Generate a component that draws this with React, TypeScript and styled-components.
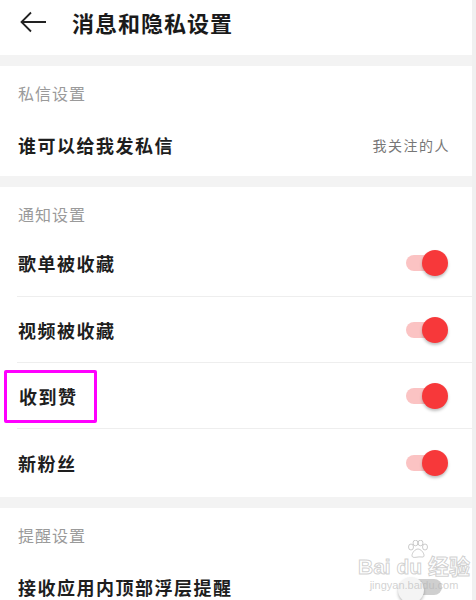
import styled, { createGlobalStyle } from 'styled-components';

const GlobalStyle = createGlobalStyle`
  *, *::before, *::after {
    box-sizing: border-box;
  }
  body {
    margin: 0;
    background: #ffffff;
    font-family: "Noto Sans CJK SC", "Noto Sans", sans-serif;
  }
`;

interface IToggleRow {
  label: string;
  on: boolean;
  height: number;
  lift: number;
  marked?: boolean;
}

const notifyRows: IToggleRow[] = [
  { label: '歌单被收藏', on: true, height: 56, lift: 12 },
  { label: '视频被收藏', on: true, height: 66, lift: 0 },
  { label: '收到赞', on: true, height: 66, lift: 0, marked: true },
  { label: '新粉丝', on: true, height: 68, lift: 0 },
];

export default function App() {
  return (
    <Page>
      <GlobalStyle />
      <Header>
        <BackIcon width={28} height={22} viewBox="0 0 28 22">
          <path d="M27 11H3M12 1.5L2.5 11l9.5 9.5" fill="none" stroke="#222" strokeWidth={1.8} />
        </BackIcon>
        <Title>消息和隐私设置</Title>
      </Header>
      <Gap />
      <Section>
        <SectionLabel>私信设置</SectionLabel>
        <Row h={56} lift={6}>
          <RowText>谁可以给我发私信</RowText>
          <RowValue>我关注的人</RowValue>
        </Row>
      </Section>
      <Gap />
      <Section>
        <SectionLabel>通知设置</SectionLabel>
        {notifyRows.map((row, index) => (
          <Row
            key={row.label}
            h={row.height}
            lift={row.lift}
            divided={index < notifyRows.length - 1}>
            {row.marked ? (
              <Marked>
                <RowText>{row.label}</RowText>
              </Marked>
            ) : (
              <RowText>{row.label}</RowText>
            )}
            <Toggle on={row.on}>
              <Knob on={row.on} />
            </Toggle>
          </Row>
        ))}
      </Section>
      <Gap />
      <Section>
        <SectionLabel>提醒设置</SectionLabel>
        <Row h={56} lift={6}>
          <RowText>接收应用内顶部浮层提醒</RowText>
          <Toggle on={false}>
            <Knob on={false} />
          </Toggle>
        </Row>
      </Section>
      <Watermark>
        {/* baidu paw */}
        <Paw width={22} height={18} viewBox="0 0 22 18">
          <g fill="none" stroke="rgba(170,170,170,0.6)" strokeWidth={1}>
            <ellipse cx={4} cy={7} rx={2.5} ry={3} />
            <ellipse cx={8.5} cy={3} rx={2.5} ry={2.8} />
            <ellipse cx={13.5} cy={3} rx={2.5} ry={2.8} />
            <ellipse cx={18} cy={7} rx={2.5} ry={3} />
            <path d="M11 9c-3 0-6 4-6 6.5S8 17.5 11 17s6 1 6-1.5S14 9 11 9z" />
          </g>
        </Paw>
        <WatermarkLogo>Bai du 经验</WatermarkLogo>
        <WatermarkUrl>jingyan.baidu.com</WatermarkUrl>
      </Watermark>
    </Page>
  );
}

const Page = styled.div`
  position: relative;
  width: 476px;
  height: 600px;
  overflow: hidden;
  background: #fff;
  border-right: 4px solid #f0f0f0;
`;

const Header = styled.header`
  display: flex;
  align-items: center;
  height: 55px;
  padding: 0 0 11px 19px;
  gap: 25px;
`;

const BackIcon = styled.svg`
  display: block;
`;

const Title = styled.h1`
  margin: 0;
  font-size: 22px;
  font-weight: 700;
  color: #1a1a1a;
  letter-spacing: 1px;
`;

const Gap = styled.div`
  height: 11px;
  background: #f3f3f3;
`;

const Section = styled.section`
  display: flex;
  flex-direction: column;
`;

const SectionLabel = styled.div`
  height: 54px;
  line-height: 54px;
  padding-left: 18px;
  font-size: 16px;
  color: #9a9a9a;
  letter-spacing: 1px;
`;

const Row = styled.div<{ h: number; lift: number; divided?: boolean }>`
  position: relative;
  display: flex;
  align-items: center;
  justify-content: space-between;
  height: ${({ h }) => h}px;
  padding: 0 30px ${({ lift }) => lift}px 18px;
  &::after {
    content: '';
    position: absolute;
    left: 17px;
    right: 0;
    bottom: 0;
    height: 1px;
    background: ${({ divided }) => (divided ? '#eeeeee' : 'transparent')};
  }
`;

const RowText = styled.span`
  font-size: 18px;
  font-weight: 700;
  color: #1e1e1e;
  letter-spacing: 1.5px;
`;

const RowValue = styled.span`
  font-size: 14px;
  color: #777;
  letter-spacing: 1.5px;
  margin-right: -8px;
`;

const Marked = styled.div`
  margin-left: -14px;
  padding: 10px 16px 11px 12px;
  border: 3px solid #ff00ff;
  border-radius: 2px;
`;

const Toggle = styled.div<{ on: boolean }>`
  position: relative;
  width: 36px;
  height: 16px;
  border-radius: 8px;
  background: ${({ on }) => (on ? '#fbc3c3' : '#cfcfcf')};
`;

const Knob = styled.div<{ on: boolean }>`
  position: absolute;
  top: 50%;
  left: ${({ on }) => (on ? '16px' : '-8px')};
  width: 26px;
  height: 26px;
  margin-top: ${({ on }) => (on ? '-13px' : '-10px')};
  border-radius: 50%;
  background: ${({ on }) => (on ? '#f7383a' : '#f4f4f4')};
  box-shadow: 0 2px 3px rgba(0, 0, 0, 0.25);
`;

const Watermark = styled.div`
  position: absolute;
  left: 358px;
  top: 540px;
  display: flex;
  flex-direction: column;
  align-items: center;
  pointer-events: none;
`;

const Paw = styled.svg`
  display: block;
  margin-left: 8px;
  margin-bottom: -2px;
`;

const WatermarkLogo = styled.span`
  font-family: "Liberation Sans", "Noto Sans CJK SC", sans-serif;
  font-size: 21px;
  font-weight: 700;
  line-height: 22px;
  color: rgba(255, 255, 255, 0.6);
  -webkit-text-stroke: 1px rgba(170, 170, 170, 0.55);
`;

const WatermarkUrl = styled.span`
  font-family: "Liberation Sans", sans-serif;
  font-size: 11px;
  line-height: 14px;
  color: rgba(180, 180, 180, 0.6);
`;
